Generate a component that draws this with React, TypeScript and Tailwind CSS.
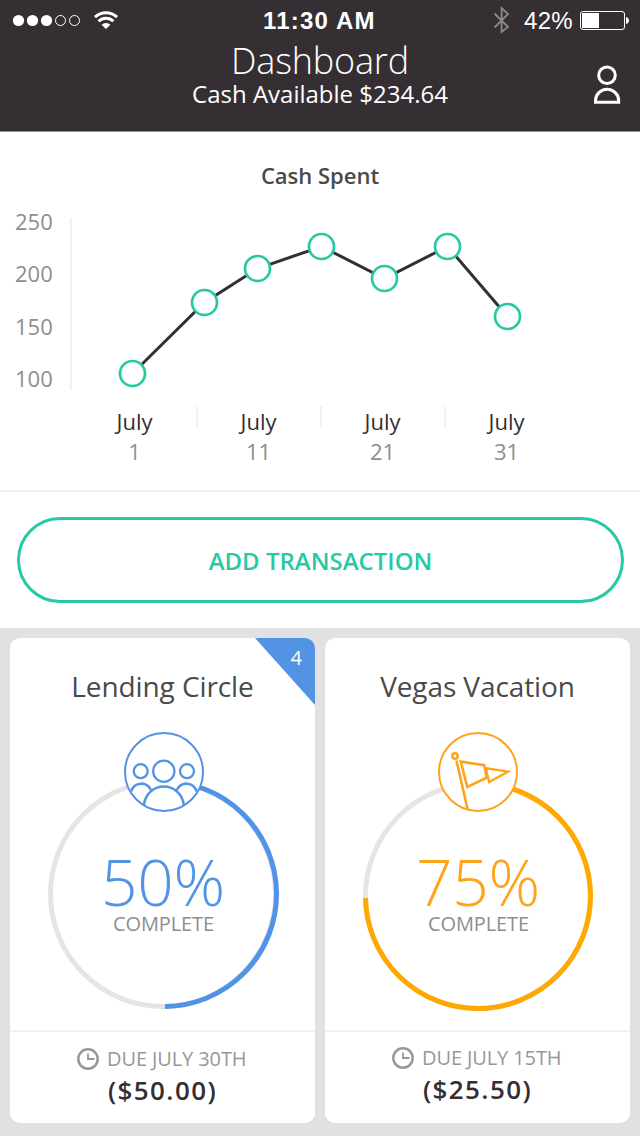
import type { ReactNode } from 'react';

const SANS = "font-['Open_Sans',sans-serif]";

const points: [number, number][] = [
  [132.5, 373.5],
  [204.5, 302.5],
  [257.5, 268.5],
  [321.5, 246.5],
  [384.5, 278.5],
  [447.5, 246.5],
  [507.5, 316.5],
];

function StatusBar() {
  return (
    <div className="flex h-10 items-center font-['Liberation_Sans',sans-serif] text-[24px] leading-[40px]">
      <svg className="ml-3 h-10 w-[70px] shrink-0" viewBox="12 0 70 40" fill="white">
        <circle cx="18.5" cy="20.5" r="5.6" />
        <circle cx="32.5" cy="20.5" r="5.6" />
        <circle cx="46.5" cy="20.5" r="5.6" />
        <circle cx="60.5" cy="20.5" r="5" fill="none" stroke="white" />
        <circle cx="74.5" cy="20.5" r="5" fill="none" stroke="white" />
      </svg>
      <svg className="ml-[10px] h-10 w-7 shrink-0" viewBox="92 0 28 40" fill="none" stroke="white" strokeWidth="3">
        <path d="M95 17.2a16 16 0 0 1 22 0" />
        <path d="M98.6 21.3a10.6 10.6 0 0 1 14.8 0" />
        <path d="M101.6 24.7a6.4 6.4 0 0 1 8.800 0L106 29z" fill="white" stroke="none" />
      </svg>
      <span className="ml-[143px] w-[114px] whitespace-nowrap pt-[1px] font-bold tracking-[1.2px]">11:30 AM</span>
      <svg className="ml-[115px] h-10 w-[20px] shrink-0" viewBox="492 0 20 40" fill="none" stroke="#8b8889" strokeWidth="1.8">
        <path d="M494.500 13.500 508 27l-6.400 5V8l6.400 6-13.500 13.500" />
      </svg>
      <span className="ml-3 w-[54px] whitespace-nowrap pt-[1px] tracking-[0.3px]">42%</span>
      <svg className="ml-[1px] h-10 w-[52px] shrink-0" viewBox="579 0 52 40">
        <rect x="580.5" y="11.500" width="44" height="18" rx="2.500" fill="none" stroke="white" />
        <rect x="582" y="13" width="17" height="15" fill="white" />
        <path d="M626 17c4 1 4 6 0 7z" fill="white" />
      </svg>
    </div>
  );
}

function Header() {
  return (
    <header className="h-[132px] border-b border-[#8f8c8e] bg-[#352f33] text-white">
      <StatusBar />
      <div className="grid grid-cols-[96px_1fr_96px]">
        <div className="col-start-2 text-center">
          <h1 className="whitespace-nowrap pt-[1px] text-[36px] font-light leading-[40px] tracking-[-0.2px]">Dashboard</h1>
          <p className="mt-[1px] whitespace-nowrap text-[24px] leading-[24px]">Cash Available $234.64</p>
        </div>
        <svg className="ml-[46px] mt-[22px] h-[46px] w-[34px]" viewBox="590 62 34 46" fill="none" stroke="white" strokeWidth="3">
          <circle cx="607" cy="75.300" r="8.300" />
          <path d="M595.500 102.300v-1.500a11.600 11.600 0 0 1 23.200 0v1.500z" />
        </svg>
      </div>
    </header>
  );
}

function Chart() {
  return (
    <section className="h-[360px] border-b-2 border-[#f2f2f2]">
      <h2 className="pt-[28px] text-center text-[22px] font-semibold leading-[30px] text-[#4a4a4a]">Cash Spent</h2>
      <div className="mt-[15px] flex h-[190px]">
        <div className="flex w-[70px] flex-col pl-[15px] text-[22px] leading-[52.400px] text-[#8e8e8e]">
          <div className="-mt-[10px]">250</div>
          <div>200</div>
          <div>150</div>
          <div>100</div>
        </div>
        <svg className="h-[190px] w-[570px]" viewBox="70 205 570 190" fill="white">
          <rect x="70" y="218" width="2" height="172" fill="#f2f2f2" />
          <polyline points={points.map((p) => p.join(',')).join(' ')} fill="none" stroke="#352f33" strokeWidth="3" />
          {points.map(([x, y]) => (
            <circle key={x} cx={x} cy={y} r="12.500" stroke="#26c9a2" strokeWidth="2.700" />
          ))}
        </svg>
      </div>
      <div className="ml-[72px] mt-[11px] flex text-center text-[22px]">
        {['1', '11', '21', '31'].map((day, i) => (
          <div key={day} className="flex w-[124px]">
            <div className={i ? 'h-[22px] w-[2px] bg-[#f2f2f2]' : 'w-[2px]'} />
            <div className="w-[121px]">
              <div className="leading-[30px] text-[#352f33]">July</div>
              <div className="leading-[30px] text-[#8e8e8e]">{day}</div>
            </div>
          </div>
        ))}
      </div>
    </section>
  );
}

function PeopleIcon() {
  return (
    <g fill="none" strokeWidth="2.300">
      <circle cx="97.700" cy="49.200" r="7" />
      <circle cx="120.800" cy="49.200" r="10.600" />
      <circle cx="144" cy="49.200" r="7" />
      <path d="M88.200 69.500a10.500 10.500 0 0 1 19.800-1.500" strokeWidth="2.600" />
      <path d="M153.600 69.500a10.500 10.500 0 0 0-19.800-1.500" strokeWidth="2.600" />
      <path d="M101 83a19.900 19.900 0 0 1 39.700 0" strokeWidth="2.600" />
    </g>
  );
}

function FlagIcon() {
  return (
    <g fill="none" strokeWidth="2.600">
      <circle cx="97" cy="34" r="2.700" />
      <path d="M98.500 38.500 109.500 87" />
      <path d="M102.800 39.600 126.300 43.200 128.700 55.700 109.300 65z" />
      <path d="M127.800 46.200 150 49.700 131.100 60z" strokeWidth="2.300" />
    </g>
  );
}

interface CardProps {
  title: string;
  percent: string;
  due: string;
  amount: string;
  accent: string;
  ringColor: string;
  arc: string;
  ringY: number;
  iconX: number;
  icon: ReactNode;
  badge?: string;
  footerPad: string;
}

function GoalCard(p: CardProps) {
  return (
    <article className="relative h-[485px] w-[305px] overflow-hidden rounded-[10px] bg-white">
      {p.badge && (
        <div className="absolute right-0 top-0 h-[67px] w-[60px] bg-[#5293e4] [clip-path:polygon(0_0,100%_0,100%_100%)]">
          <span className="absolute right-[13px] top-[5px] text-[20px] leading-[30px] text-white">{p.badge}</span>
        </div>
      )}
      <h3 className="pt-[28px] text-center text-[28px] leading-[40px] tracking-[-0.1px] text-[#4a4a4a]">{p.title}</h3>
      <div className="ml-[33px] mt-[16px] grid h-[308px] w-[240px] grid-cols-1 grid-rows-1">
        <svg className="col-start-1 row-start-1 h-[300px] w-[240px]" viewBox="0 0 240 300" fill="none">
          <circle cx="120" cy={p.ringY} r="112.500" stroke="#e6e5e4" strokeWidth="5" />
          <path d={p.arc} stroke={p.ringColor} strokeWidth="5" />
          <circle cx={p.iconX} cy="50" r="39" fill="white" stroke={p.accent} strokeWidth="2" />
          <g stroke={p.accent}>{p.icon}</g>
        </svg>
        <div className="col-start-1 row-start-1 pt-[124px] text-center">
          <div className="text-[64px] font-light leading-[72px] tracking-[-0.3px]" style={{ color: p.accent }}>{p.percent}</div>
          <div className="-mt-[6px] pl-[1px] text-[20px] leading-[24px] tracking-[-0.1px] text-[#8e8e8e]">COMPLETE</div>
        </div>
      </div>
      <div className={`border-t-2 border-[#f2f2f2] ${p.footerPad}`}>
        <div className="flex items-center pl-[66px] text-[20px] leading-[28px] tracking-[-0.1px] text-[#979797]">
          <svg className="mr-[7px] h-6 w-6" viewBox="0 0 24 24" fill="none" stroke="#979797">
            <circle cx="12" cy="12" r="9.700" strokeWidth="2.500" />
            <path d="M12 6.500V12h6.500" strokeWidth="1.800" />
          </svg>
          <span className="pt-[1px]">{p.due}</span>
        </div>
        <div className="mt-[1px] text-center text-[26px] font-semibold leading-[32px] tracking-[1.4px] text-[#352f33]">{p.amount}</div>
      </div>
    </article>
  );
}

export default function App() {
  return (
    <div className={`h-[1136px] w-[640px] overflow-hidden bg-white ${SANS}`}>
      <Header />
      <Chart />
      <div className="flex h-[136px] pl-[17px] pt-[25px]">
        <button className="h-[86px] w-[607px] rounded-[43px] border-[3px] border-[#26c9a2] pt-[2px] text-[24px] font-semibold text-[#26c9a2]">
          ADD TRANSACTION
        </button>
      </div>
      <main className="flex h-[508px] gap-[10px] bg-[#e1e1e1] p-[10px]">
        <GoalCard
          title="Lending Circle"
          percent="50%"
          due="DUE JULY 30TH"
          amount="($50.00)"
          accent="#5293e4"
          ringColor="#5293ea"
          ringY={172}
          arc="M120 59.500A112.500 112.500 0 0 1 122 284.500"
          iconX={121}
          icon={<PeopleIcon />}
          badge="4"
          footerPad="pt-[12px]"
        />
        <GoalCard
          title="Vegas Vacation"
          percent="75%"
          due="DUE JULY 15TH"
          amount="($25.50)"
          accent="#fea41a"
          ringColor="#ffa800"
          ringY={174}
          arc="M120 61.500A112.500 112.500 0 1 1 7.500 176"
          iconX={120}
          icon={<FlagIcon />}
          footerPad="pt-[11px]"
        />
      </main>
    </div>
  );
}
